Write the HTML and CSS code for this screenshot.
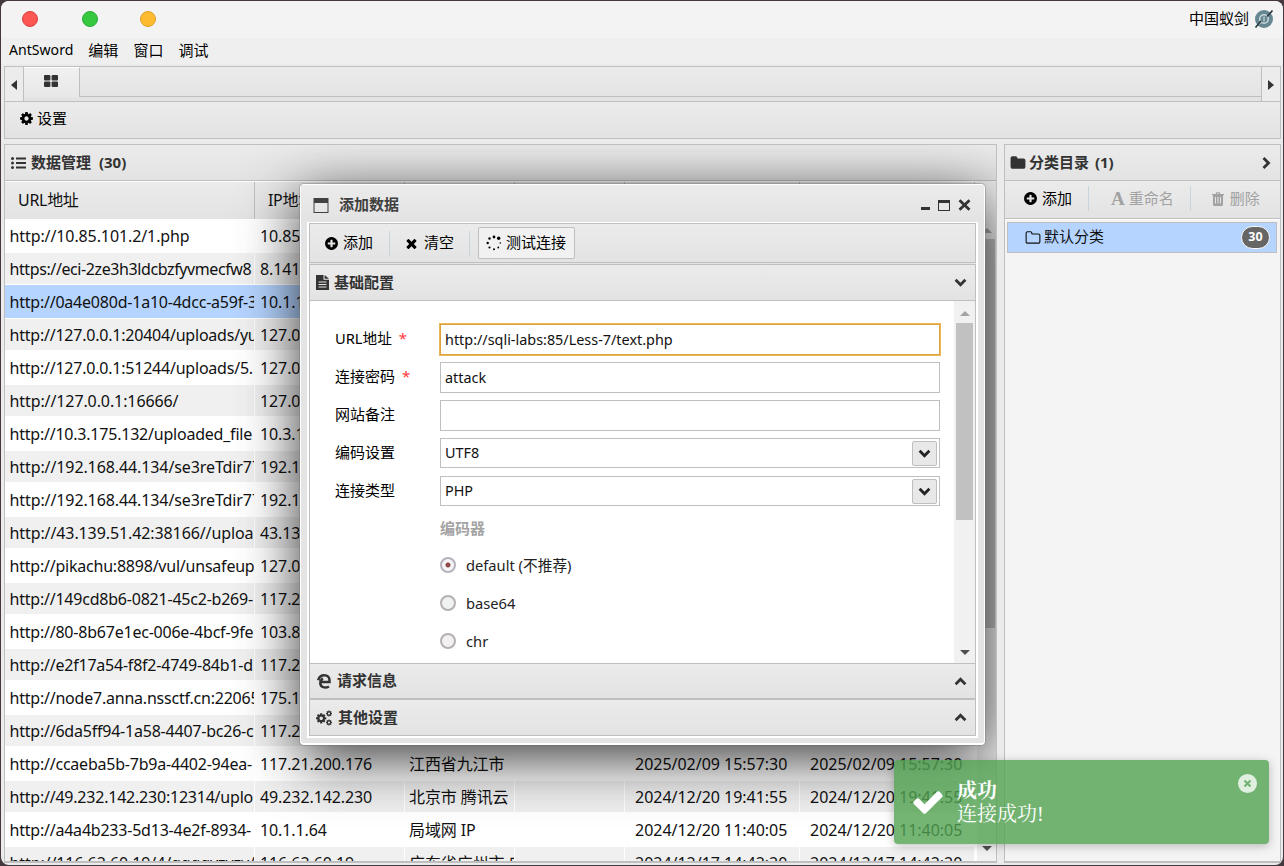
FILE: index.html
```html
<!DOCTYPE html>
<html lang="zh-CN">
<head>
<meta charset="utf-8">
<title>中国蚁剑</title>
<link rel="stylesheet" href="styles.css">
</head>
<body>
<svg width="0" height="0" class="defs">
  <symbol id="cog" viewBox="0 0 1792 1792"><path d="M1152 896q0-106-75-181t-181-75-181 75-75 181 75 181 181 75 181-75 75-181zm512-109v222q0 12-8 23t-20 13l-185 28q-19 54-39 91 35 50 107 138 10 12 10 25t-9 23q-27 37-99 108t-94 71q-12 0-26-9l-138-108q-44 23-91 38-16 136-29 186-7 28-36 28h-222q-14 0-24.500-8.500t-11.500-21.500l-28-184q-49-16-90-37l-141 107q-10 9-25 9-14 0-25-11-126-114-165-168-7-10-7-23 0-12 8-23 15-21 51-66.500t54-70.500q-27-50-41-99l-183-27q-13-2-21-12.500t-8-23.500v-222q0-12 8-23t19-13l186-28q14-46 39-92-40-57-107-138-10-12-10-24 0-10 9-23 26-36 98.500-107.500t94.500-71.500q13 0 26 10l138 107q44-23 91-38 16-136 29-186 7-28 36-28h222q14 0 24.500 8.500t11.500 21.500l28 184q49 16 90 37l142-107q9-9 24-9 13 0 25 10 129 119 165 170 7 8 7 22 0 12-8 23-15 21-51 66.500t-54 70.500q26 50 41 98l183 28q13 2 21 12.500t8 23.500z"/></symbol>
  <symbol id="plus" viewBox="0 0 1792 1792"><path d="M1344 960v-128q0-26-19-45t-45-19h-256v-256q0-26-19-45t-45-19h-128q-26 0-45 19t-19 45v256h-256q-26 0-45 19t-19 45v128q0 26 19 45t45 19h256v256q0 26 19 45t45 19h128q26 0 45-19t19-45v-256h256q26 0 45-19t19-45zm320-64q0 209-103 385.500t-279.500 279.500-385.500 103-385.500-103-279.500-279.500-103-385.500 103-385.500 279.500-279.500 385.500-103 385.500 103 279.500 279.500 103 385.500z"/></symbol>
  <symbol id="folder" viewBox="0 0 1792 1792"><path d="M1728 608v704q0 92-66 158t-158 66h-1216q-92 0-158-66t-66-158v-960q0-92 66-158t158-66h320q92 0 158 66t66 158v32h672q92 0 158 66t66 158z"/></symbol>
  <symbol id="folder-o" viewBox="0 0 1792 1792"><path d="M1600 1312v-704q0-40-28-68t-68-28h-704q-40 0-68-28t-28-68v-64q0-40-28-68t-68-28h-320q-40 0-68 28t-28 68v960q0 40 28 68t68 28h1216q40 0 68-28t28-68zm128-704v704q0 92-66 158t-158 66h-1216q-92 0-158-66t-66-158v-960q0-92 66-158t158-66h320q92 0 158 66t66 158v32h672q92 0 158 66t66 158z"/></symbol>
  <symbol id="times" viewBox="0 0 1792 1792"><path d="M1490 1322q0 40-28 68l-136 136q-28 28-68 28t-68-28l-294-294-294 294q-28 28-68 28t-68-28l-136-136q-28-28-28-68t28-68l294-294-294-294q-28-28-28-68t28-68l136-136q28-28 68-28t68 28l294 294 294-294q28-28 68-28t68 28l136 136q28 28 28 68t-28 68l-294 294 294 294q28 28 28 68z"/></symbol>
  <symbol id="check" viewBox="0 0 1792 1792"><path d="M1671 566q0 40-28 68l-724 724-136 136q-28 28-68 28t-68-28l-136-136-362-362q-28-28-28-68t28-68l136-136q28-28 68-28t68 28l294 295 656-657q28-28 68-28t68 28l136 136q28 28 28 68z"/></symbol>
  <symbol id="down" viewBox="0 0 12 12"><path d="M1.500 3.500 6 8l4.500-4.500" fill="none" stroke="currentColor" stroke-width="2.600"/></symbol>
  <symbol id="up" viewBox="0 0 12 12"><path d="M1.500 8.500 6 4l4.500 4.500" fill="none" stroke="currentColor" stroke-width="2.600"/></symbol>
</svg>

<div class="window">
  <header class="titlebar">
    <i class="dot red"></i><i class="dot green"></i><i class="dot yellow"></i>
    <span class="app-name">中国蚁剑</span>
    <svg class="logo" width="20" height="20" viewBox="0 0 20 20"><circle cx="10" cy="10" r="9" fill="#668792"/><circle cx="10" cy="10" r="4.300" fill="none" stroke="#c9d6da" stroke-width="1.600"/><path d="M10 7.500v5M7 14l-2 1M13.500 6l2-1" stroke="#c9d6da" stroke-width="1.200"/><path d="M1.500 18.500 7 12M13 7.500 18.500 1.500" stroke="#27363d" stroke-width="1.600"/></svg>
  </header>
  <nav class="menubar"><span>AntSword</span><span>编辑</span><span>窗口</span><span>调试</span></nav>

  <div class="tabs">
    <div class="arrow"><svg width="6" height="10"><path d="M6 0v10L0 5z"/></svg></div>
    <div class="tab"><svg width="14" height="12" viewBox="0 0 14 12"><rect width="6.400" height="5.500" rx="1"/><rect x="7.600" width="6.400" height="5.500" rx="1"/><rect y="6.500" width="6.400" height="5.500" rx="1"/><rect x="7.600" y="6.500" width="6.400" height="5.500" rx="1"/></svg></div>
    <div class="tab-space"></div>
    <div class="arrow next"><svg width="6" height="10"><path d="M0 0v10l6-5z"/></svg></div>
  </div>
  <div class="toolbar"><svg class="ic" width="15" height="15"><use href="#cog"/></svg><span>设置</span></div>

  <main class="panels">
    <section class="panel data">
      <div class="panel-head"><svg class="list" width="15" height="12" viewBox="0 0 15 12"><path d="M5 .5h10v2H5zM5 5h10v2H5zM5 9.500h10v2H5z"/><circle cx="1.500" cy="1.500" r="1.500"/><circle cx="1.500" cy="6" r="1.500"/><circle cx="1.500" cy="10.500" r="1.500"/></svg><span>数据管理 (30)</span></div>
      <div class="grid">
        <div class="table">
          <div class="row head"><span>URL地址</span><span>IP地址</span><span></span><span></span><span></span><span></span></div>
          <div class="row"><span>http://10.85.101.2/1.php</span><span>10.85</span><span></span><span></span><span></span><span></span></div>
          <div class="row"><span class="t2">https://eci-2ze3h3ldcbzfyvmecfw8</span><span>8.141</span><span></span><span></span><span></span><span></span></div>
          <div class="row selected"><span class="t1">http://0a4e080d-1a10-4dcc-a59f-3</span><span>10.1.1</span><span></span><span></span><span></span><span></span></div>
          <div class="row"><span class="t1">http://127.0.0.1:20404/uploads/yu</span><span>127.0</span><span></span><span></span><span></span><span></span></div>
          <div class="row"><span class="t1">http://127.0.0.1:51244/uploads/5.</span><span>127.0</span><span></span><span></span><span></span><span></span></div>
          <div class="row"><span>http://127.0.0.1:16666/</span><span>127.0</span><span></span><span></span><span></span><span></span></div>
          <div class="row"><span class="t1">http://10.3.175.132/uploaded_file</span><span>10.3.1</span><span></span><span></span><span></span><span></span></div>
          <div class="row"><span>http://192.168.44.134/se3reTdir77</span><span>192.1</span><span></span><span></span><span></span><span></span></div>
          <div class="row"><span>http://192.168.44.134/se3reTdir77</span><span>192.1</span><span></span><span></span><span></span><span></span></div>
          <div class="row"><span>http://43.139.51.42:38166//uploa</span><span>43.13</span><span></span><span></span><span></span><span></span></div>
          <div class="row"><span class="t1">http://pikachu:8898/vul/unsafeupl</span><span>127.0</span><span></span><span></span><span></span><span></span></div>
          <div class="row"><span class="t1">http://149cd8b6-0821-45c2-b269-</span><span>117.2</span><span></span><span></span><span></span><span></span></div>
          <div class="row"><span class="t1">http://80-8b67e1ec-006e-4bcf-9fe</span><span>103.8</span><span></span><span></span><span></span><span></span></div>
          <div class="row"><span class="t1">http://e2f17a54-f8f2-4749-84b1-d</span><span>117.2</span><span></span><span></span><span></span><span></span></div>
          <div class="row"><span class="t1">http://node7.anna.nssctf.cn:22065</span><span>175.1</span><span></span><span></span><span></span><span></span></div>
          <div class="row"><span class="t1">http://6da5ff94-1a58-4407-bc26-c</span><span>117.2</span><span></span><span></span><span></span><span></span></div>
          <div class="row"><span class="t1">http://ccaeba5b-7b9a-4402-94ea-</span><span>117.21.200.176</span><span>江西省九江市</span><span></span><span>2025/02/09 15:57:30</span><span>2025/02/09 15:57:30</span></div>
          <div class="row"><span class="t1">http://49.232.142.230:12314/uplo</span><span>49.232.142.230</span><span>北京市 腾讯云</span><span></span><span>2024/12/20 19:41:55</span><span>2024/12/20 19:41:55</span></div>
          <div class="row"><span class="t1">http://a4a4b233-5d13-4e2f-8934-</span><span>10.1.1.64</span><span>局域网 IP</span><span></span><span>2024/12/20 11:40:05</span><span>2024/12/20 11:40:05</span></div>
          <div class="row"><span>http://116.62.60.19/4/ggggyzyzy/</span><span>116.62.60.19</span><span>广东省广州市 电</span><span></span><span>2024/12/17 14:42:20</span><span>2024/12/17 14:42:20</span></div>
        </div>
        <div class="scrollbar main-scroll"><b class="tri up"></b><i class="thumb"></i><b class="tri down"></b></div>
      </div>

      <div class="dialog">
        <div class="dialog-title"><svg width="16" height="15" viewBox="0 0 16 15"><path fill-rule="evenodd" d="M.5 0h15v15H.5zM1.500 5v9h13V5z"/></svg><span>添加数据</span>
          <div class="controls"><i class="min"></i><i class="max"></i><svg width="13" height="12" viewBox="0 0 13 12"><path d="M1.500 1.200l10 9.600M11.500 1.200l-10 9.600" stroke="#333" stroke-width="2.800"/></svg></div>
        </div>
        <div class="dialog-body">
          <div class="dialog-tools">
            <div class="btn"><svg class="ic" width="15" height="15"><use href="#plus"/></svg><span>添加</span></div>
            <i class="sep"></i>
            <div class="btn clear"><svg class="ic" width="15" height="15"><use href="#times"/></svg><span>清空</span></div>
            <i class="sep"></i>
            <div class="btn boxed"><svg width="16" height="16" viewBox="0 0 16 16"><circle cx="8" cy="2" r="1.400"/><circle cx="12.700" cy="3.300" r="1.700"/><circle cx="14.300" cy="8" r=".8"/><circle cx="12.300" cy="12.500" r=".9"/><circle cx="8" cy="14.300" r="1"/><circle cx="3.500" cy="12.500" r="1.100"/><circle cx="1.700" cy="8" r="1.200"/><circle cx="3.500" cy="3.500" r="1.200"/></svg><span>测试连接</span></div>
          </div>
          <div class="section first"><svg width="13" height="15" viewBox="0 0 13 15"><path fill-rule="evenodd" d="M0 0h7.500v4.800H13V15H0zM8.600 0 13 3.800H8.600zM2.500 6.500v1h8v-1zM2.500 9v1h8V9zM2.500 11.500v1h8v-1z"/></svg><span>基础配置</span><svg class="chev" width="13" height="13"><use href="#down"/></svg></div>
          <div class="form-wrap">
            <div class="form">
              <div class="field focus"><label>URL地址 <em>*</em></label><div class="input">http://sqli-labs:85/Less-7/text.php</div></div>
              <div class="field"><label>连接密码 <em>*</em></label><div class="input">attack</div></div>
              <div class="field"><label>网站备注</label><div class="input"></div></div>
              <div class="field"><label>编码设置</label><div class="input combo">UTF8<span class="drop"><svg width="13" height="13"><use href="#down"/></svg></span></div></div>
              <div class="field"><label>连接类型</label><div class="input combo">PHP<span class="drop"><svg width="13" height="13"><use href="#down"/></svg></span></div></div>
              <div class="group">编码器</div>
              <div class="radio"><i class="on"></i>default (不推荐)</div>
              <div class="radio"><i></i>base64</div>
              <div class="radio"><i></i>chr</div>
            </div>
            <div class="scrollbar form-scroll"><b class="tri up"></b><i class="thumb"></i><b class="tri down"></b></div>
          </div>
          <div class="section"><svg width="14" height="15" viewBox="0 0 14 15"><path d="M1.200 6.200C2 3 4.500 1.300 7.300 1.300c3.200 0 5.200 2.200 5.200 5v1.600H4.200M12 12.500c-4 2.200-8.700.8-8.700-3.600 0-2.200 1-3.500 2.500-4.600" fill="none" stroke="#333" stroke-width="2.500"/></svg><span>请求信息</span><svg class="chev" width="13" height="13"><use href="#up"/></svg></div>
          <div class="section last"><svg class="cogs" width="16" height="16" viewBox="0 0 16 16"><use href="#cog" x="-.8" y="2.300" width="12" height="12"/><use href="#cog" x="9.500" y="0" width="7" height="7"/><use href="#cog" x="9.500" y="9" width="7" height="7"/></svg><span>其他设置</span><svg class="chev" width="13" height="13"><use href="#up"/></svg></div>
        </div>
      </div>
    </section>

    <aside class="panel category">
      <div class="panel-head"><svg class="ic" width="16" height="16"><use href="#folder"/></svg><span>分类目录 (1)</span><svg class="collapse" width="9" height="12" viewBox="0 0 9 12"><path d="M1.500 1 6.500 6l-5 5" fill="none" stroke="#333" stroke-width="2.800"/></svg></div>
      <div class="cat-tools">
        <div class="btn"><svg class="ic" width="15" height="15"><use href="#plus"/></svg><span>添加</span></div>
        <i class="sep"></i>
        <div class="btn off rename"><b class="letter">A</b><span>重命名</span></div>
        <i class="sep"></i>
        <div class="btn off trash"><svg width="12" height="14" viewBox="0 0 12 14"><path fill-rule="evenodd" d="M3.500 2 4.300.2h3.400L8.500 2H12v1.300h-1V12.500Q11 14 9.600 14H2.400Q1 14 1 12.500V3.300H0V2zM4.800 2h2.400l-.4-.8H5.200zM3 5v6.500h1V5zM5.500 5v6.500h1V5zM8 5v6.500h1V5z"/></svg><span>删除</span></div>
      </div>
      <div class="cat-list"><div class="cat-item"><svg class="ic" width="16" height="16"><use href="#folder-o"/></svg><span>默认分类</span><b class="badge">30</b></div></div>
    </aside>
  </main>
</div>

<div class="toast">
  <svg class="tick" width="34" height="34"><use href="#check"/></svg>
  <div class="message"><strong>成功</strong><span>连接成功!</span></div>
  <svg class="toast-close" width="19" height="19" viewBox="0 0 19 19"><circle cx="9.500" cy="9.500" r="9.500" fill="#e0efe0"/><path d="m6.500 6.500 6 6m0-6-6 6" stroke="#73b373" stroke-width="2.200"/></svg>
</div>
</body>
</html>
```
FILE: styles.css
```css
* { box-sizing: border-box; }
body { margin: 0; width: 1284px; height: 866px; padding: 1px; overflow: hidden; background: #43393f; color: #111; font: 15px/20px "Noto Sans", "Noto Sans CJK SC", sans-serif; }
svg { display: block; flex: none; fill: currentColor; }
.defs { position: absolute; }
i, em { font-style: normal; }
span, label { white-space: nowrap; }
.window { width: 1282px; height: 864px; border-radius: 8px; overflow: hidden; background: #ebebeb; display: flex; flex-direction: column; }

.titlebar { height: 37px; flex: none; background: #f3f3f3; display: flex; align-items: center; padding: 0 9px 1px 21px; }
.dot { width: 16px; height: 16px; border-radius: 50%; border: 1px solid; }
.red { background: #fc5753; border-color: #df3d40; margin-right: 44px; }
.green { background: #36c93f; border-color: #27aa35; margin-right: 42px; }
.yellow { background: #fdbc2f; border-color: #dfa023; }
.app-name { margin-left: auto; margin-right: 5px; padding-bottom: 3px; color: #000; }
.menubar { height: 26px; flex: none; background: #efefef; display: flex; align-items: center; gap: 15px; padding: 0 0 2px 8px; color: #000; }
.menubar span:first-child { font-size: 14.100px; }

.tabs { height: 35px; flex: none; margin: 2px 2px 0 3px; border: 1px solid #bfbfbf; border-bottom: 0; display: flex; background: linear-gradient(#ebebeb, #e3e3e3); color: #333; }
.arrow { width: 19px; display: flex; align-items: center; justify-content: center; padding-top: 2px; border-right: 1px solid #bfbfbf; background: #ececec; }
.arrow.next { border-right: 0; border-left: 1px solid #bfbfbf; }
.tab { width: 56px; display: flex; justify-content: center; padding: 7px 2px 0 0; height: 30px; border-right: 1px solid #bfbfbf; background: linear-gradient(#f0f0f0, #e8e8e8); border-top: 1px solid #fff; }
.tab-space { flex: 1; height: 30px; border-bottom: 1px solid #bfbfbf; }
.toolbar { height: 38px; flex: none; margin: 0 2px 0 3px; border: 1px solid #bfbfbf; display: flex; align-items: center; padding: 0 0 3px 14px; gap: 3px; color: #000; background: linear-gradient(#ebebeb, #e3e3e3); }
.toolbar span { padding-bottom: 2px; }

.panels { display: flex; gap: 7px; margin: 5px 2px 0 3px; height: 718px; }
.panel { position: relative; border: 1px solid #bfbfbf; border-bottom-width: 2px; overflow: hidden; background: #f4f4f4; height: 719px; }
.data { width: 993px; background: #fff; }
.category { flex: 1; }
.panel-head { height: 36px; padding: 0 9px 0 6px; display: flex; align-items: center; gap: 5px; font-weight: bold; word-spacing: 4px; color: #333; background: linear-gradient(#ebebeb, #e3e3e3); border-bottom: 1px solid #bfbfbf; }
.panel-head span { padding-bottom: 2px; }
.category .panel-head { gap: 3px; padding-left: 5px; word-spacing: 2px; }
.collapse { margin-left: auto; }
.grid { display: flex; }
.table { width: 972px; height: 680px; overflow: hidden; }
.row { height: 33px; display: grid; grid-template-columns: 250px 150px 110px 110px 175px 175px; width: 970px; border-bottom: 2px solid #fff; font-size: 16px; line-height: 32px; letter-spacing: -.1px; }
.row span { overflow: hidden; padding-left: 5px; border-right: 1px solid #fff; height: 31px; }
.row span:first-child { padding-left: 4.500px; }
.row .t1 { letter-spacing: -.22px; }
.row .t2 { letter-spacing: -.4px; }
.row span:nth-child(3) { padding-left: 4px; }
.row span:nth-child(n+5) { padding-left: 10px; letter-spacing: -.02px; }
.row:nth-child(odd):not(.head) { background: #f0f0f0; }
.row.head { width: 972px; height: 39px; line-height: 36px; border-top: 1px solid #fff; border-bottom: 1px solid #fff; background: linear-gradient(#ebebeb, #e3e3e3); }
.row.head span { height: 37px; padding-left: 13px; border-right-color: #bfbfbf; letter-spacing: -.3px; }
.table .row.selected { background: #b5d4ff; border-bottom-width: 1px; box-shadow: 0 -1px #b5d4ff; }
.row.selected span { border-right-color: #b5d4ff; }

.scrollbar { background: #f1f1f1; display: flex; flex-direction: column; align-items: center; }
.tri { width: 0; height: 0; border: 5px solid transparent; }
.tri.up { border-top: 0; border-bottom-color: #a3a3a3; }
.tri.down { border-bottom: 0; border-top-color: #505050; margin-top: auto; }
.thumb { display: block; background: #c1c1c1; width: 17px; }
.main-scroll { width: 19px; height: 680px; padding: 47px 0 10px; }
.main-scroll .thumb { height: 389px; margin-top: 6px; }

.dialog { position: absolute; left: 295px; top: 39px; width: 685px; height: 561px; border: 1px solid #fff; border-bottom-width: 2px; border-radius: 4px; padding: 0 6px 6px; background: #e4e4e4; box-shadow: 0 0 0 1px rgba(120,120,120,.4), 0 13px 58px rgba(0,0,0,.8); color: #111; }
.dialog-title { height: 37px; margin: 0 -6px; padding: 3px 13px 0 12px; display: flex; align-items: center; gap: 10px; font-weight: bold; color: #404040; background: linear-gradient(#ebebeb, #e3e3e3); }
.dialog-title span { padding-bottom: 3px; }
.controls { margin-left: auto; display: flex; align-items: center; gap: 8px; }
.min { width: 9px; height: 3px; background: #333; margin-top: 7px; }
.max { width: 12px; height: 11px; border: 1px solid #333; border-top-width: 3px; }
.dialog-body { border: 2px solid #fff; border-top-width: 1px; height: 516px; }
.dialog-tools { height: 40px; border: 1px solid #bfbfbf; display: flex; align-items: center; background: linear-gradient(#ebebeb, #e3e3e3); padding-left: 14px; color: #000; }
.btn { display: flex; align-items: center; gap: 4px; }
.btn span { padding-bottom: 2px; }
.sep { width: 1px; height: 25px; background: #c8d6db; margin: 0 15px 0 16px; }
.clear { gap: 5px; margin-left: -1px; }
.clear + .sep { margin: 0 8px 0 15px; }
.boxed { border: 1px solid #bfbfbf; border-radius: 2px; background: #f1f1f1; height: 32px; padding: 0 7px; width: 97px; gap: 4px; }
.section { height: 36px; display: flex; align-items: center; padding: 0 8px 0 7px; gap: 6px; color: #333; font-weight: bold; border: 1px solid #bfbfbf; background: linear-gradient(#ebebeb, #e3e3e3); }
.section span { padding-bottom: 2px; }
.section.first { height: 37px; margin-top: 1px; padding-left: 6px; gap: 5px; }
.section.last { height: 37px; padding-left: 6px; }
.chev { margin-left: auto; }
.form-wrap { display: flex; height: 362px; border: 1px solid #bfbfbf; border-width: 0 1px; background: #fff; }
.form { flex: 1; padding: 21px 0 0 25px; }
.field { display: flex; height: 38px; align-items: flex-start; }
.field label { width: 105px; line-height: 32px; color: #000; }
.field em { color: #ff3b3b; margin-left: 3px; }
.field.focus label { font-size: 14.700px; }
.input { width: 500px; height: 31px; margin-top: 2px; border: 1px solid #bfbfbf; line-height: 30px; padding-left: 4px; font-size: 14.400px; }
.focus .input { border-color: #dfa23c; box-shadow: 0 0 0 1px #e9b75c; }
.combo { height: 30px; display: flex; justify-content: space-between; padding-right: 2px; align-items: center; }
.drop { width: 25px; height: 25px; border: 1px solid #bfbfbf; border-radius: 2px; background: #e8e8e8; display: flex; align-items: center; justify-content: center; color: #222; }
.group { margin-left: 105px; height: 38px; line-height: 33px; color: #a3a3a3; font-weight: bold; }
.radio { margin-left: 105px; height: 38px; display: flex; align-items: flex-start; gap: 10px; line-height: 30px; font-size: 14.700px; color: #222; }
.radio i { width: 16px; height: 16px; margin-top: 7px; border: 2px solid #b5b0b2; border-radius: 50%; background: #f1f1f1; }
.radio .on { border-color: #b4b3bd; background: radial-gradient(circle, #934848 0 2px, #f5f5f8 3px); }
.form-scroll { width: 21px; padding: 10px 0 8px; }
.form-scroll .thumb { height: 197px; margin-top: 7px; }

.cat-tools { height: 38px; display: flex; align-items: center; padding: 0 0 2px 18px; background: linear-gradient(#ebebeb, #e3e3e3); border-bottom: 1px solid #bfbfbf; color: #000; }
.cat-tools .sep { margin: 0 22px 0 16px; }
.cat-tools .rename + .sep { margin: 0 21px 0 16px; }
.off { color: #a2a2a2; }
.letter { font: bold 19px/20px "Liberation Serif", serif; }
.trash { gap: 6px; }
.cat-list { padding: 2px 3px 3px 2px; border-top: 1px solid #fff; }
.cat-item { height: 31px; border: 1px solid #bfbfbf; background: #b5d4ff; display: flex; align-items: center; gap: 3px; padding: 0 6px 0 17px; color: #111; }
.cat-item span { padding-bottom: 3px; }
.badge { margin-left: auto; width: 29px; height: 23px; border: 1px solid #fff; border-radius: 12px; background: #666; color: #fff; font-size: 12.500px; line-height: 20px; text-align: center; }

.toast { position: absolute; left: 894px; top: 760px; width: 375px; height: 84px; border-radius: 4px; background: rgba(81,163,81,.8); box-shadow: 0 2px 10px rgba(0,0,0,.25); color: #fff; display: flex; align-items: center; padding-left: 17px; }
.message { margin: 2px 0 0 12px; display: flex; flex-direction: column; font: 20px/23px "Liberation Serif", "Noto Serif CJK SC", "Noto Sans CJK SC", serif; }
.toast-close { margin: -38px 12px 0 auto; }
```
